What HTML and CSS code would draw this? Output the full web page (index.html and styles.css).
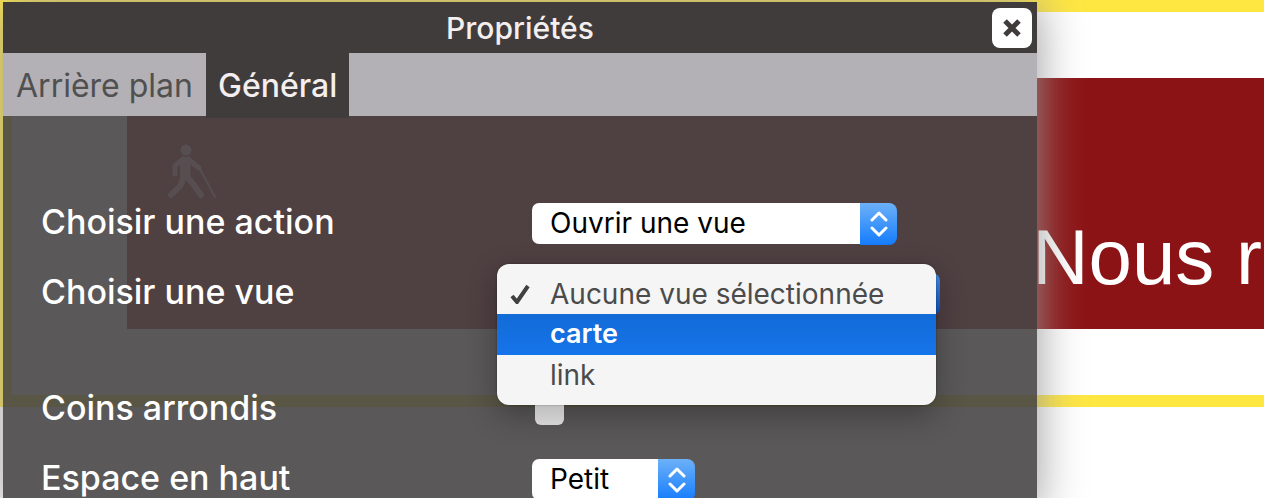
FILE: index.html
```html
<!DOCTYPE html>
<html lang="fr">
<head>
<meta charset="utf-8">
<title>Propriétés</title>
<link rel="stylesheet" href="styles.css">
</head>
<body>
<main class="page">
  <section class="preview">
    <div class="banner">
      <svg class="walker" viewBox="0 0 50 56" aria-hidden="true">
        <circle cx="19" cy="6" r="5.5"/>
        <path class="torso" d="M14 14h9v21h-9z"/>
        <path class="limb" d="M16 15l-8 7v8M21 15l11 9"/>
        <path class="leg" d="M17 33l-4 9-9 9M20 33l7 8 7 10"/>
        <path class="cane" d="M33 25l15 28"/>
      </svg>
      <p class="headline">Nous r</p>
    </div>
  </section>

  <section class="panel" aria-labelledby="panel-title">
    <header class="panel-head">
      <h1 class="panel-title" id="panel-title">Propriétés</h1>
      <button class="close" type="button" aria-label="Fermer">
        <svg viewBox="0 0 20 20" aria-hidden="true"><path d="M3 3l14 14M17 3L3 17"/></svg>
      </button>
    </header>
    <nav class="tabs">
      <button class="tab" type="button">Arrière plan</button>
      <button class="tab tab-active" type="button">Général</button>
    </nav>
    <form class="fields">
      <div class="row">
        <label for="action">Choisir une action</label>
        <div class="select select-medium">
          <select id="action"><option>Ouvrir une vue</option></select>
          <span class="stepper"><svg viewBox="0 0 18 26" aria-hidden="true"><path d="M2 9l7-7 7 7M2 17l7 7 7-7"/></svg></span>
        </div>
      </div>
      <div class="row">
        <label for="view">Choisir une vue</label>
        <div class="select select-wide">
          <select id="view"><option>Aucune vue sélectionnée</option><option>carte</option><option>link</option></select>
          <span class="stepper stepper-pressed"></span>
          <ul class="menu" role="listbox" aria-label="Choisir une vue">
            <li class="option" role="option" aria-selected="true">
              <svg class="check" viewBox="0 0 20 20" aria-hidden="true"><path d="M2 12l5 6L18 2"/></svg>
              Aucune vue sélectionnée
            </li>
            <li class="option option-active" role="option" aria-selected="false">carte</li>
            <li class="option" role="option" aria-selected="false">link</li>
          </ul>
        </div>
      </div>
      <div class="row row-group">
        <label for="corners">Coins arrondis</label>
        <input class="checkbox" type="checkbox" id="corners">
      </div>
      <div class="row">
        <label for="space">Espace en haut</label>
        <div class="select select-small">
          <select id="space"><option>Petit</option></select>
          <span class="stepper"><svg viewBox="0 0 18 26" aria-hidden="true"><path d="M2 9l7-7 7 7M2 17l7 7 7-7"/></svg></span>
        </div>
      </div>
    </form>
  </section>
</main>
</body>
</html>
```
FILE: styles.css
```css
* {
  box-sizing: border-box;
}

body {
  margin: 0;
  background: #fff;
  font-family: Inter, "Liberation Sans", sans-serif;
}

.page {
  position: relative;
  height: 100vh;
  overflow: hidden;
}

.preview {
  padding: 66px 0 66px 115px;
  border: 12px solid #ffe742;
  border-right: 0;
}

.banner {
  display: flex;
  align-items: flex-start;
  height: 251px;
  padding: 66px 0 0 40px;
  overflow: hidden;
  background: #8c1315;
}

.walker {
  flex: none;
  width: 50px;
  height: 56px;
  fill: #d898a8;
}

.walker path {
  stroke: #d898a8;
  stroke-linecap: round;
  stroke-linejoin: round;
}

.walker .limb {
  fill: none;
  stroke-width: 5;
}

.walker .leg {
  fill: none;
  stroke-width: 6;
}

.walker .torso {
  stroke-width: 1;
}

.walker .cane {
  fill: none;
  stroke-width: 2;
}

.headline {
  margin: 69px 0 0 auto;
  padding-right: 2px;
  color: #fff;
  font: 78px/88px "Liberation Sans", sans-serif;
  white-space: nowrap;
}

.panel {
  position: absolute;
  top: 2px;
  right: 227px;
  left: 3px;
  background: rgba(72, 70, 71, 0.9);
  box-shadow: 0 0 44px #999;
}

.panel-head {
  display: grid;
  grid-template-columns: 40px 1fr 40px;
  align-items: center;
  height: 51px;
  padding: 0 5px;
  background: #403c3b;
}

.panel-title {
  grid-column: 2;
  margin: 0;
  color: #f4eeee;
  font-size: 30px;
  font-weight: 500;
  line-height: 40px;
  text-align: center;
}

.close {
  display: grid;
  place-items: center;
  width: 40px;
  height: 40px;
  padding: 0;
  border: 0;
  border-radius: 8px;
  background: #fff;
}

.close svg {
  width: 20px;
  height: 20px;
  fill: none;
  stroke: #403c3b;
  stroke-width: 5;
}

.tabs {
  display: flex;
  height: 63px;
  background: #b3b1b6;
}

.tab {
  height: 65px;
  padding: 0 13px;
  border: 0;
  background: none;
  color: #505050;
  font: 32px/64px Inter, sans-serif;
  white-space: nowrap;
}

.tab-active {
  padding: 0 12px;
  background: #403c3b;
  color: #f4eeee;
  font-weight: 500;
}

.fields {
  padding: 71px 38px 0;
}

.row {
  display: grid;
  grid-template-columns: 491px 1fr;
  align-items: center;
  height: 70px;
  color: #fff;
  font-size: 34px;
  font-weight: 500;
  line-height: 44px;
}

.row-group {
  margin-top: 46px;
}

.select {
  position: relative;
  display: flex;
  height: 42px;
  margin-top: 3px;
}

.select-medium {
  width: 365px;
}

.select-wide {
  width: 408px;
}

.select-small {
  width: 163px;
}

.select select {
  flex: 1;
  min-width: 0;
  height: 41px;
  padding: 0 18px;
  border: 0;
  border-radius: 7px 0 0 7px;
  appearance: none;
  background: #fff;
  color: #000;
  font: 28px/41px Inter, sans-serif;
}

.stepper {
  display: grid;
  place-items: center;
  width: 37px;
  border-radius: 0 8px 8px 0;
  background: linear-gradient(#6cb1f8, #157cfd);
  pointer-events: none;
}

.stepper-pressed {
  background: linear-gradient(#4a90e6, #0a55d0);
}

.stepper svg {
  width: 18px;
  height: 26px;
  fill: none;
  stroke: #fff;
  stroke-width: 3;
  stroke-linecap: round;
  stroke-linejoin: round;
}

.menu {
  position: absolute;
  top: -9px;
  left: -35px;
  z-index: 1;
  width: 439px;
  margin: 0;
  padding: 10px 0;
  border-radius: 12px;
  background: #f5f5f5;
  box-shadow: 0 10px 30px rgba(0, 0, 0, 0.3), 0 0 2px rgba(0, 0, 0, 0.4);
  list-style: none;
}

.option {
  display: flex;
  align-items: center;
  height: 40px;
  padding-left: 53px;
  color: #4b4b4b;
  font-size: 28px;
  font-weight: 400;
}

.option-active {
  height: 41px;
  background: linear-gradient(#126bd6, #1674eb);
  color: #fff;
  font-size: 27px;
  font-weight: 600;
}

.check {
  width: 20px;
  height: 20px;
  margin: 0 20px 0 -40px;
  fill: none;
  stroke: #404040;
  stroke-width: 4;
}

.checkbox {
  width: 29px;
  height: 29px;
  margin: 5px 3px 0;
  border-radius: 6px;
  appearance: none;
  background: linear-gradient(#fff, #e4e4e4);
}
```
